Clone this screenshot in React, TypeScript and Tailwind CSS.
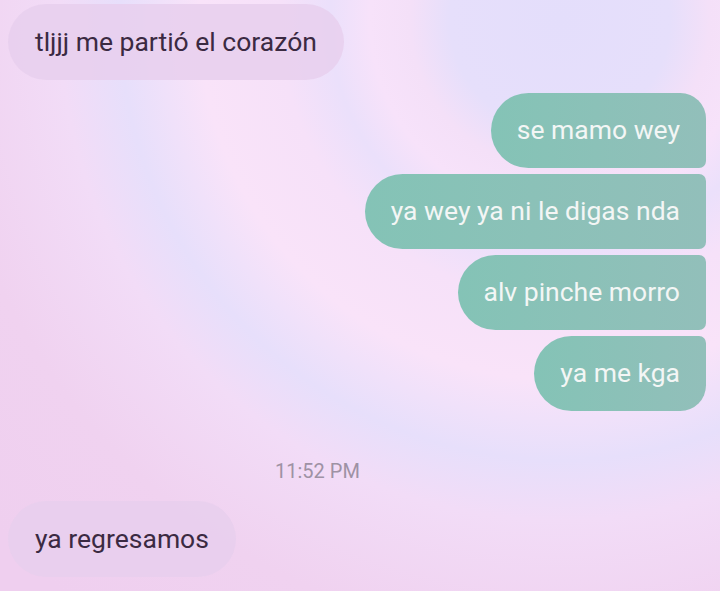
const sent = [
  { text: 'se mamo wey', corners: 'rounded-l-[38px] rounded-tr-[26px] rounded-br-[7px]' },
  { text: 'ya wey ya ni le digas nda', corners: 'rounded-l-[38px] rounded-r-[7px]' },
  { text: 'alv pinche morro', corners: 'rounded-l-[38px] rounded-r-[7px]' },
  { text: 'ya me kga', corners: 'rounded-l-[38px] rounded-tr-[7px] rounded-br-[26px]' },
];

function Received({ text }: { text: string }) {
  return (
    <div className="flex">
      <div className="h-[76px] flex items-center px-[27px] rounded-full bg-[#e8cfed]/85 text-[#3b2a42] text-[26.5px] leading-none">
        {text}
      </div>
    </div>
  );
}

export default function App() {
  return (
    <div
      className="w-[720px] h-[591px] overflow-hidden bg-[radial-gradient(circle_at_560px_20px,#e4defb_0px,#e6dffb_110px,#f4e0f8_150px,#f7e2fa_190px,#ebe0fb_230px,#f6e1f9_280px,#f9e3f9_360px,#e7dffb_440px,#f2dcf7_500px,#f0d2f0_620px,#efcfef_760px)] font-['Roboto','Liberation_Sans',sans-serif]"
    >
      <div className="pt-[4px] pl-[8px] pr-[14px]">
        <Received text="tljjj me partió el corazón" />

        <div className="mt-[13px] flex flex-col items-end gap-[6px]">
          {sent.map((m) => (
            <div
              key={m.text}
              className={`h-[75px] flex items-center px-[26px] bg-gradient-to-r from-[#84c3b6] to-[#92bfba] text-[#f3f6f5] text-[26.5px] leading-none ${m.corners}`}
            >
              {m.text}
            </div>
          ))}
        </div>

        <div className="mt-[50px] pl-[267px] text-[20px] leading-none text-[#9e92a4]">11:52 PM</div>

        <div className="mt-[20px]">
          <Received text="ya regresamos" />
        </div>
      </div>
    </div>
  );
}
